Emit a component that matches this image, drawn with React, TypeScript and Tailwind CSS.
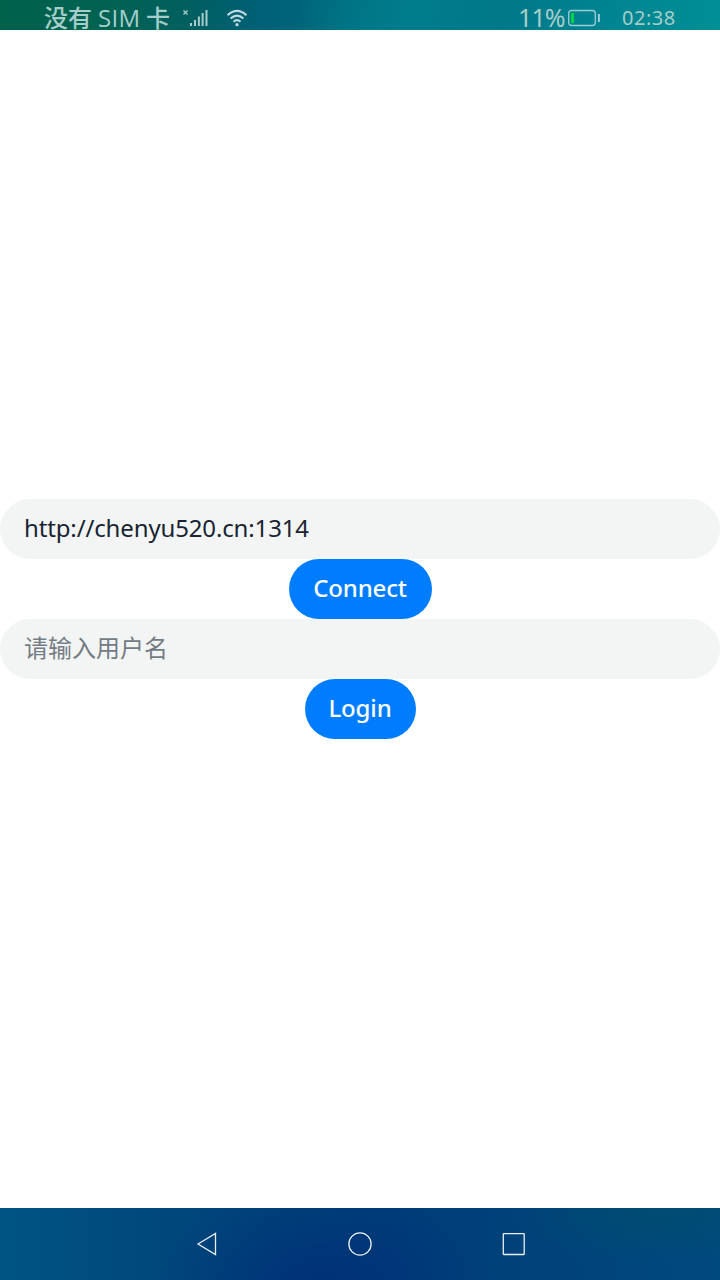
import React from "react";

const textFont = "font-['Noto_Sans','Noto_Sans_CJK_SC',sans-serif]";

function SignalIcon() {
  return (
    <svg className="ml-[8px] h-[30px] w-[30px] shrink-0" viewBox="180 0 30 30" fill="none" stroke="#a5cdc9">
      <path d="M183.5 10.5l4 4M187.5 10.5l-4 4" strokeWidth="1.300" />
      <path d="M191 26v-3M195 26v-6M198.900 26v-9.500M202.600 26v-13M206.500 26V10" strokeWidth="2" />
    </svg>
  );
}

function WifiIcon() {
  return (
    <svg className="ml-[15px] h-[30px] w-[24px] shrink-0" viewBox="225 0 24 30" fill="none" stroke="#bddbe0" strokeWidth="2.100">
      <path d="M227.600 15.200Q237 6.700 246.400 15.200M230.600 18.600Q237 12.600 243.400 18.600M233.500 21.800Q237 18.500 240.500 21.800" />
      <circle cx="237" cy="24.700" r="1.600" fill="#bddbe0" stroke="none" />
    </svg>
  );
}

function BatteryIcon() {
  return (
    <svg className="h-[30px] w-[36px] shrink-0" viewBox="566 0 36 30" fill="none">
      <rect x="568.700" y="10.500" width="26.600" height="15" rx="3" stroke="#9bcdd5" strokeWidth="1.300" />
      <rect x="571.200" y="13" width="2.600" height="10" fill="#00e03c" />
      <path d="M598.900 14v8" stroke="#9bcdd5" strokeWidth="2" />
    </svg>
  );
}

function StatusBar() {
  return (
    <header className="flex h-[30px] shrink-0 items-center bg-[linear-gradient(100deg,#00614b_0%,#006352_15%,#005f60_27%,#006077_36%,#006479_41%,#007484_48%,#007d8c_57%,#007888_70%,#008592_85%,#008f95_100%)] text-[#a5cdca]">
      <div className="flex w-[172px] shrink-0 pl-[44px] pt-[5px] text-[24px] leading-[24px] whitespace-pre">
        <span className="w-[54px] font-medium">没有</span>
        <span className="w-[48px] font-['Open_Sans',sans-serif] font-medium tracking-[0.300px]">SIM</span>
        <span className="font-medium">卡</span>
      </div>
      <SignalIcon />
      <WifiIcon />
      <div className="ml-auto flex items-center">
        <span className="w-[48px] pt-[4px] text-[25px] leading-[26px] tracking-[-0.900px]">11%</span>
        <BatteryIcon />
        <span className="ml-[20px] w-[98px] pt-[5px] text-[20px] leading-[24px] tracking-[0.500px]">02:38</span>
      </div>
    </header>
  );
}

function Field(props: React.InputHTMLAttributes<HTMLInputElement>) {
  return (
    <input
      {...props}
      className="block h-[60px] w-full rounded-full bg-[#f3f5f5] px-6 pb-[3px] text-[24px] tracking-[-0.140px] text-[#182431] outline-none placeholder:tracking-normal placeholder:text-[#747c84]"
    />
  );
}

function NavBar() {
  return (
    <nav className="h-[72px] shrink-0 bg-[radial-gradient(ellipse_170px_90px_at_320px_72px,#002b77b0_0%,#002b7700_100%),radial-gradient(ellipse_160px_60px_at_660px_0px,#004e6dc0_0%,#004e6d00_100%),linear-gradient(90deg,#005582_0%,#004a7c_18%,#004079_42%,#003d79_55%,#00427a_75%,#00497f_100%)]">
      <svg className="h-[72px] w-[720px]" viewBox="0 1208 720 72" fill="none" stroke="#e8eff5" strokeWidth="1.300">
        <path d="M198 1244L215.500 1233.500V1254.500Z" />
        <circle cx="360" cy="1244" r="11.100" />
        <rect x="503.300" y="1233.600" width="20.900" height="20.900" rx="0.500" />
      </svg>
    </nav>
  );
}

export default function App() {
  return (
    <div className={`flex h-[1280px] w-[720px] flex-col bg-white ${textFont}`}>
      <StatusBar />
      <main className="flex flex-1 flex-col items-center justify-center">
        <Field defaultValue="http://chenyu520.cn:1314" aria-label="http://chenyu520.cn:1314" />
        <button className="h-[60px] w-[143px] rounded-full bg-[#007dff] pb-[2px] text-[24px] font-medium tracking-[-0.150px] text-white">Connect</button>
        <Field placeholder="请输入用户名" />
        <button className="h-[60px] w-[111px] rounded-full bg-[#007dff] pb-[2px] text-[24px] font-medium tracking-[-0.150px] text-white">Login</button>
      </main>
      <NavBar />
    </div>
  );
}
